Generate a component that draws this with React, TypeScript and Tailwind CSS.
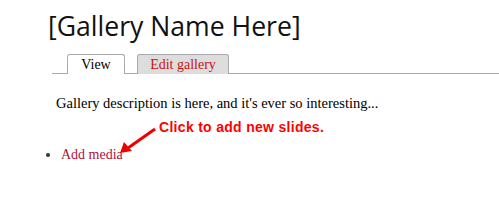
export default function App() {
  return (
    <div className="relative h-[204px] w-[499px] overflow-hidden bg-white pl-12 pt-[9px]">
      <h1 className="text-[26.6px] leading-[34px] text-[#111] font-['Open_Sans',sans-serif]">
        [Gallery Name Here]
      </h1>
      <div className="mt-[11px] ml-[4px] flex gap-3 border-b border-[#aaa] pl-[15px] font-['Liberation_Serif',serif] text-[14px]">
        <div className="-mb-px flex h-[20px] w-[58px] items-center justify-center rounded-t-[3px] border border-b-0 border-[#aaa] bg-white text-black">
          View
        </div>
        <div className="-mb-px flex h-[20px] w-[92px] items-center justify-center rounded-t-[3px] border border-b-0 border-[#aaa] bg-[#dddddd] text-[#cc1111]">
          Edit gallery
        </div>
      </div>
      <p className="ml-[8px] mt-[20px] font-['Liberation_Serif',serif] text-[14.5px] leading-[18px] text-black">
        Gallery description is here, and it's ever so interesting...
      </p>
      <ul className="mt-[34px] list-disc pl-[13px] font-['Liberation_Serif',serif] text-[14px] leading-[18px] marker:text-[#333]">
        <li>
          <a className="text-[#b0103a]">Add media</a>
        </li>
      </ul>
      <div className="absolute left-[159px] top-[119px] font-['Liberation_Sans',sans-serif] text-[14px] font-bold leading-[16px] tracking-[0.3px] text-[#ff0000]">
        Click to add new slides.
      </div>
      <svg className="absolute left-0 top-0" width="499" height="204" viewBox="0 0 499 204">
        <line x1="155" y1="129" x2="128" y2="148" stroke="#ee0000" strokeWidth="3" />
        <polygon points="120,153 124,142 132,151" fill="#ee0000" />
      </svg>
    </div>
  );
}
